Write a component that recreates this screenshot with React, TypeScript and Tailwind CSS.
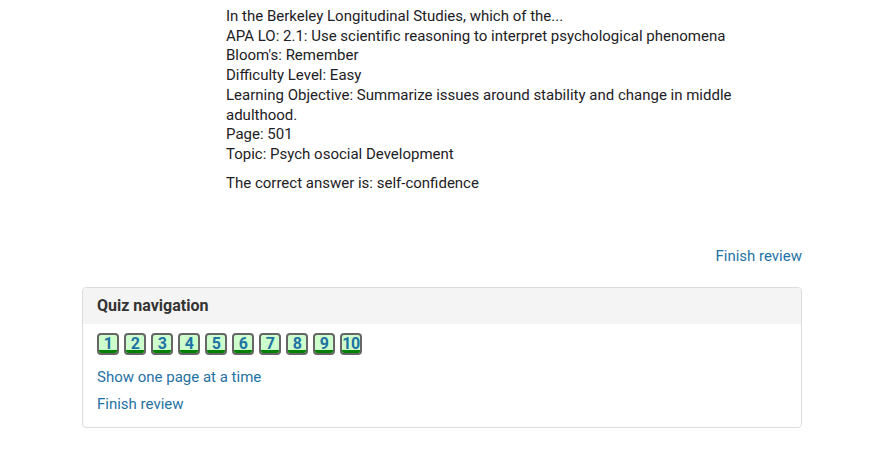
import React from "react";

const lines = [
  "In the Berkeley Longitudinal Studies, which of the...",
  "APA LO: 2.1: Use scientific reasoning to interpret psychological phenomena",
  "Bloom's: Remember",
  "Difficulty Level: Easy",
  "Learning Objective: Summarize issues around stability and change in middle adulthood.",
  "Page: 501",
  "Topic: Psych osocial Development",
];

export default function App() {
  return (
    <div className="w-[880px] h-[470px] bg-white text-[15px] leading-[19.7px] text-[#1d2125]" style={{ fontFamily: "Roboto, 'Liberation Sans', sans-serif" }}>
      <div className="w-[720px] ml-[82px] pt-[7px]">
        <div className="ml-[144px] w-[520px]">
          {lines.map((l, i) => (
            <div key={i}>{l}</div>
          ))}
          <div className="mt-[9px]">The correct answer is: self-confidence</div>
        </div>
        <div className="mt-[53px] flex justify-end">
          <a className="text-[#1f72a4] leading-[20px]">Finish review</a>
        </div>
        <div className="mt-[21px] border border-[#dcdcdc] rounded-[4px] overflow-hidden">
          <div className="h-[36px] bg-[#f4f4f4] px-[14px] flex items-center font-bold text-[16px] text-[#333]">
            Quiz navigation
          </div>
          <div className="px-[14px] pt-[9px] pb-[13px]">
            <div className="flex gap-[5px]">
              {Array.from({ length: 10 }, (_, i) => (
                <div
                  key={i}
                  className="relative w-[22px] h-[22px] border-2 border-[#666] rounded-[4px] bg-[#ccffcc] overflow-hidden flex items-center justify-center font-bold text-[16px] leading-[16px] text-[#1f72a4] tracking-[-0.5px]"
                >
                  <span className="-mt-[1px]">{i + 1}</span>
                  <div className="absolute left-0 right-0 bottom-0 h-[3px] bg-[#008000]" />
                </div>
              ))}
            </div>
            <div className="mt-[12px] text-[#1f72a4] leading-[20px]">Show one page at a time</div>
            <div className="mt-[7px] text-[#1f72a4] leading-[20px]">Finish review</div>
          </div>
        </div>
      </div>
    </div>
  );
}
